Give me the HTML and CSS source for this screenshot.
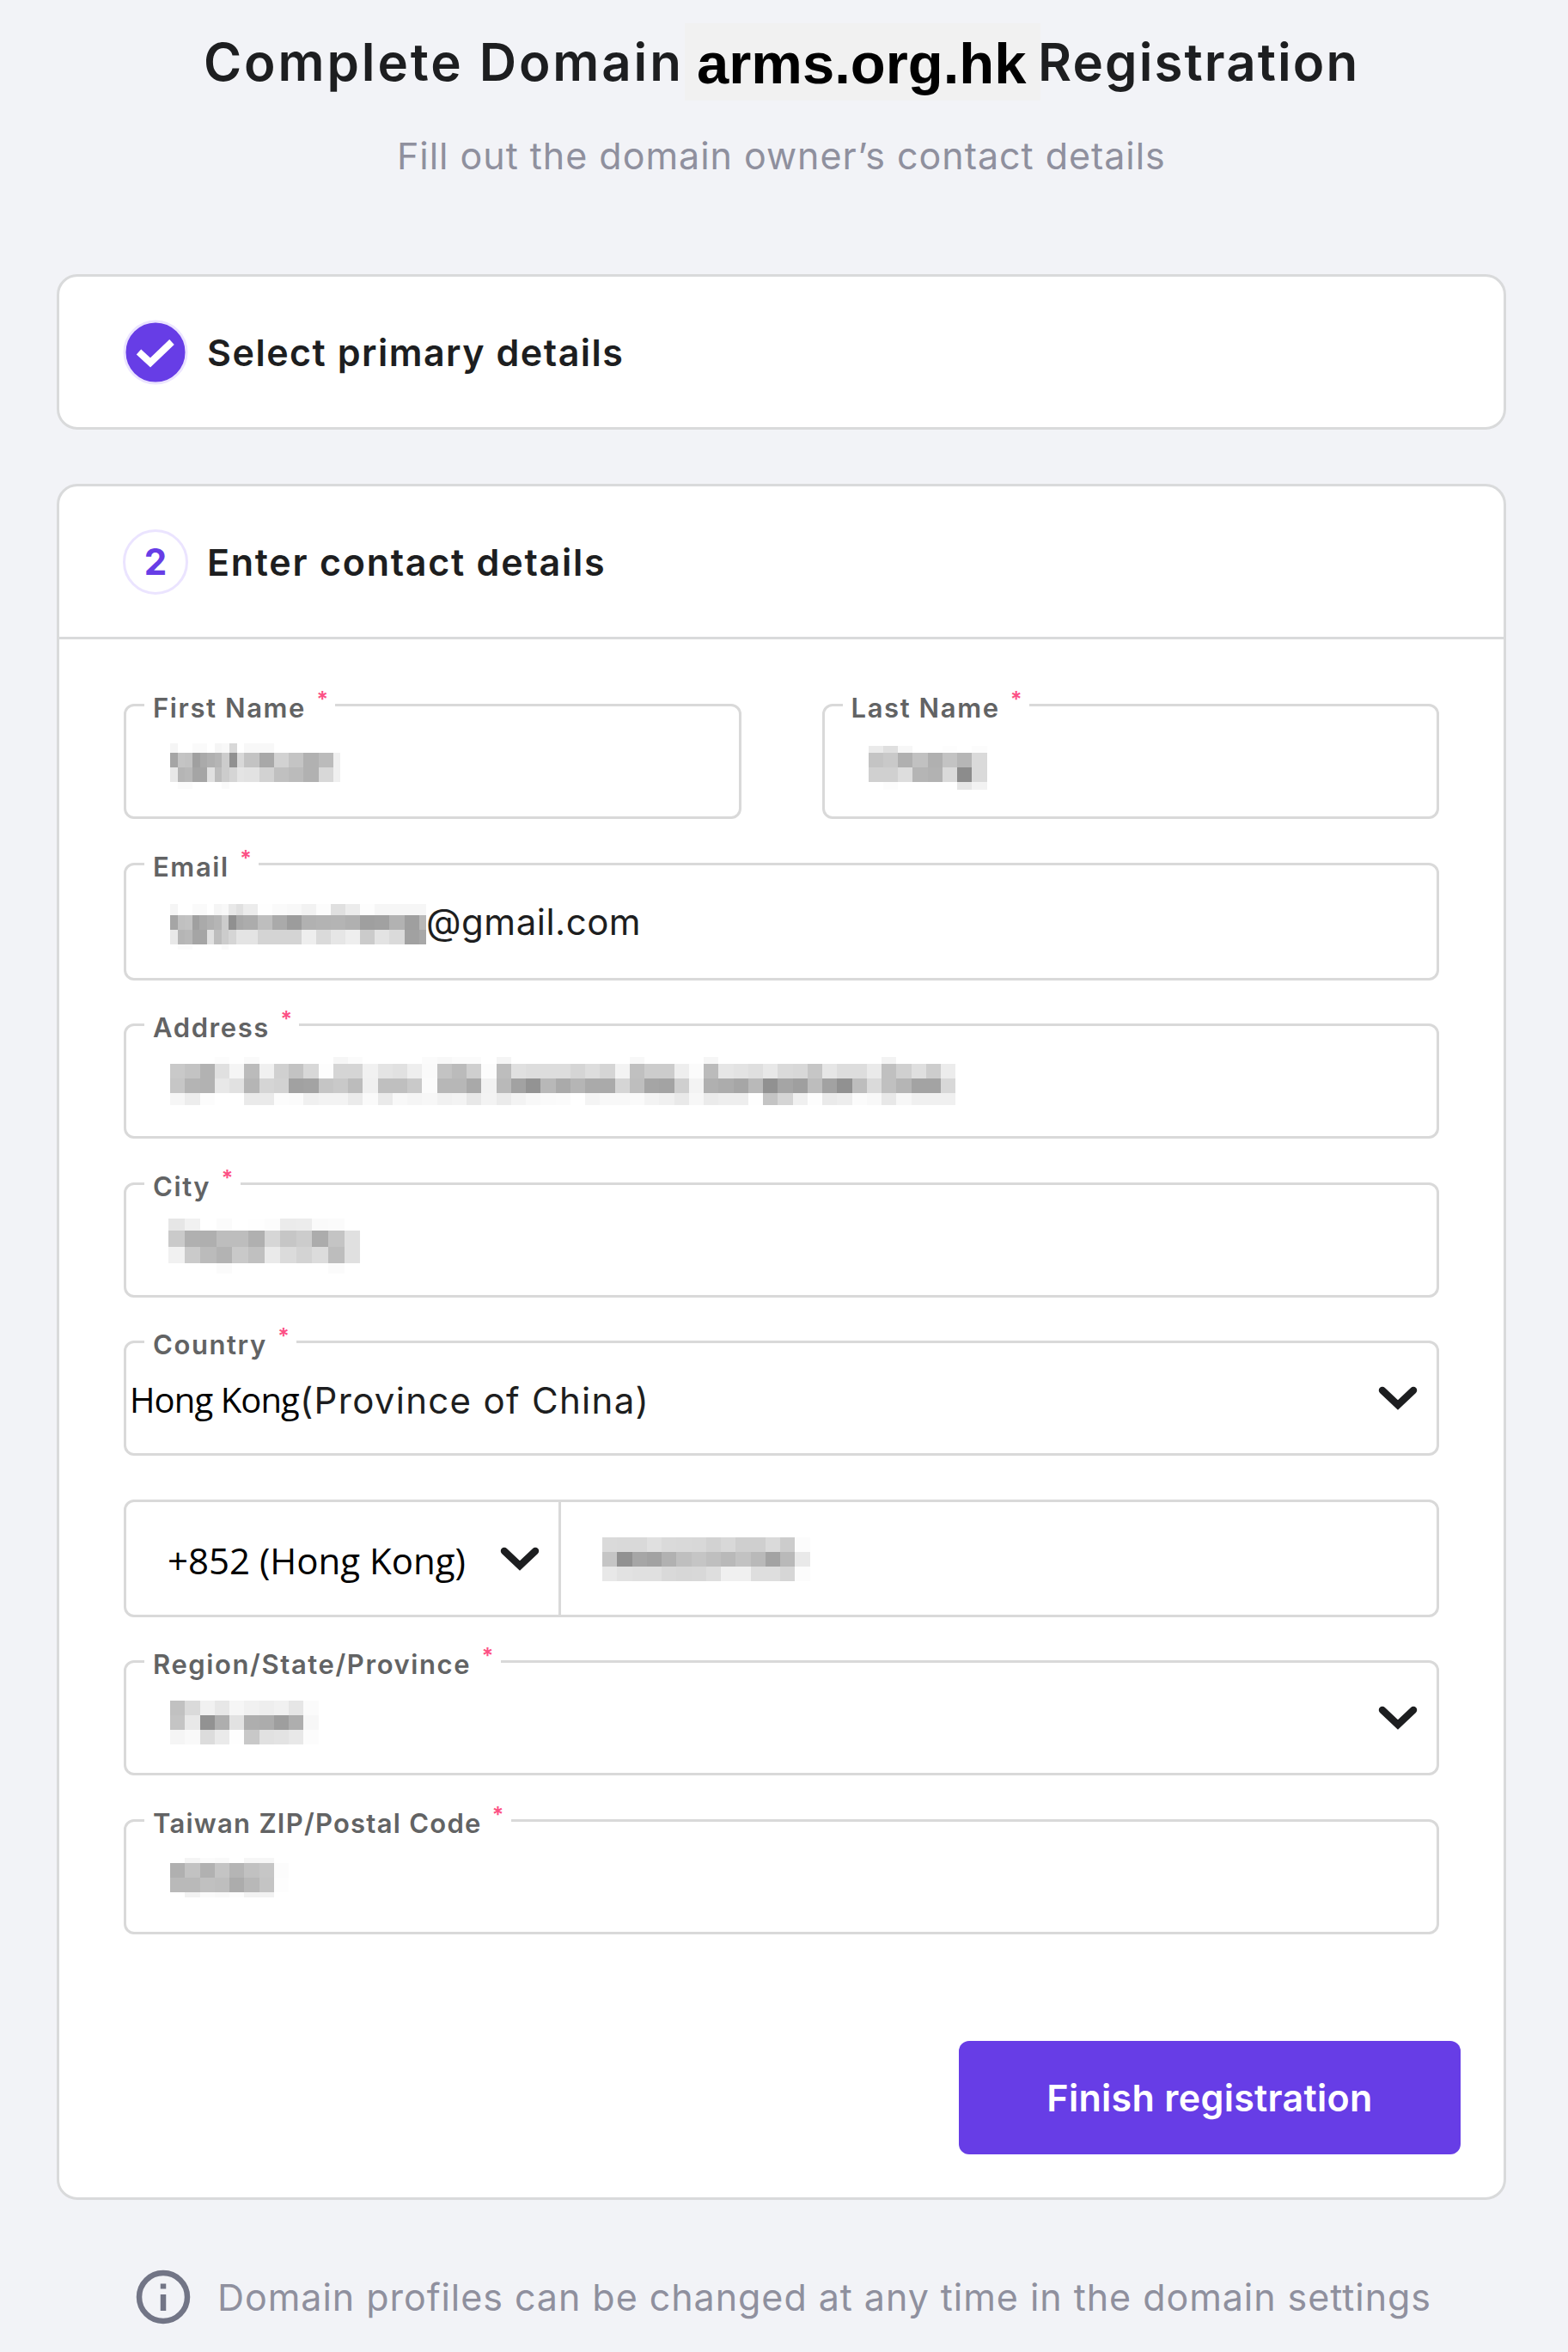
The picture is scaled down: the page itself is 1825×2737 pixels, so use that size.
FILE: index.html
```html
<!DOCTYPE html>
<html lang="en">
<head>
  <meta charset="UTF-8">
  <meta name="viewport" content="width=device-width, initial-scale=1.0">
  <title>Complete Domain Registration</title>
  <link rel="stylesheet" href="styles.css">
</head>
<body>

  <header class="header">
    <h1 class="title"><span class="t1">Complete Domain</span><span class="domain">arms.org.hk</span><span class="t2">Registration</span></h1>
    <p class="subtitle">Fill out the domain owner’s contact details</p>
  </header>

  <section class="card">
    <div class="card-head">
      <svg class="step" viewBox="0 0 76 76">
        <circle cx="38" cy="38" r="36" fill="#673de6" stroke="#ebe4ff" stroke-width="3"/>
        <path d="M18.500 37.500L32 50L57 26" fill="none" stroke="#fff" stroke-width="8"/>
      </svg>
      <h2 class="h-select">Select primary details</h2>
    </div>
  </section>

  <section class="card card-form">
    <div class="card-head">
      <span class="step step-num">2</span>
      <h2 class="h-enter">Enter contact details</h2>
    </div>

    <form class="form">
      <div class="row">
        <div class="field">
          <label>First Name <sup>*</sup></label>
          <div class="mosaic m-first" data-rows="f5fffffafafff5f8d8fff8f8f8f8 a5c4c2a0aab0b5cc90d8c3c3a8a8d2d2c4c4b1b1bbbbf0 e8b5b8a5a5e0bdccd5e4e2e2d2d2c0c0bbbbb1b1d8d8f0 fffbfbfffffffffa"></div>
        </div>
        <div class="field">
          <label>Last Name <sup>*</sup></label>
          <div class="mosaic m-last" data-rows="eadff7fffffdfffc c4c9b0c1b0c3b6da d0d0ddb5b2da8cda fffcffffffffe6f2"></div>
        </div>
      </div>

      <div class="field tall">
        <label>Email <sup>*</sup></label>
        <div class="mosaic m-email" data-rows="f5fffffafafff5f8e8e0ececfefefafaf8f8f2f2fcfce0e0ececfdfdf6f6f6f6f6f6f6 a5c0c2a0aab0b5cc90a8acacbebeaaaa9c9cb1b1b3b3b4b4b0b09f9fa1a1b2b29f9fb8 e8b5b8a5a5e0bdccd5e4e4e4d4d4d4d4d4d4eeeedadae6e6eeeecbcbe3e3dadaa1a1a8 fffbfbfffffffffa"></div>
        <span class="value v-mail">@gmail.com</span>
      </div>

      <div class="field">
        <label>Address <sup>*</sup></label>
        <div class="mosaic m-address" data-rows="fffffffcfffafffffffffff6fbfffffffffbf8fbfbfff5fffffffffffffffff8fffffffff6fffffffffffffffffffffff3 c9c3b2e0f5bbf0d0c3d8fdd5d5f1e4e1eefac3bbcffcbde0ddddddd5ddd5f3c0cccceefbbbe6e3dfe8dad8c6e6ddddeac0d0dfcdec c6b4b2e8e1b5d5d2a1a3c5c9bcf0bfbfc9fbb7b7a9f2b9a293b8aab5aaaad5bea5a3cff3b0aca6b991a59fbda291bddac0b5a3a3d8 f6edfcffffeaeafcfbf0f3f3ebfaeaf8f5f7f1f3e8f3ebf3f8fafbfff4f8f8faf3f0e9f7ebeeeefec4d5f0fdeaedfbf8e8f7f0f0f0"></div>
      </div>

      <div class="field">
        <label>City <sup>*</sup></label>
        <div class="mosaic m-city" data-rows="e6f1fffbfffefcebecfafbff cab0afbdbdb0d6c6ccacc4e0 f1cabbb3c9c0eadbd3dcbde0 fffffffbfffffffffffffbff"></div>
      </div>

      <div class="field">
        <label>Country <sup>*</sup></label>
        <span class="value v-hk">Hong Kong</span><span class="value v-prov">(Province of China)</span>
        <svg class="chevron" viewBox="0 0 46 30"><path d="M5 5L23 22L41 5" fill="none" stroke="#1d1e20" stroke-width="8.500" stroke-linecap="round"/></svg>
      </div>

      <div class="field tall phone">
        <div class="code">
          <span class="value v-code">+852 (Hong Kong)</span>
          <svg class="chevron" viewBox="0 0 46 30"><path d="M5 5L23 22L41 5" fill="none" stroke="#1d1e20" stroke-width="8.500" stroke-linecap="round"/></svg>
        </div>
        <div class="mosaic m-phone" data-rows="dad9d9e0dad9d8d2d8cfcfdaccfc c591a6a2b1bfc5bfb9c2b9a3b9e9 e8e2e0e0d9d7d8def0f0deded6fc"></div>
      </div>

      <div class="field">
        <label>Region/State/Province <sup>*</sup></label>
        <div class="mosaic m-region" data-rows="c1daf1e7f6f1eef1e6fb c4e892aee2aeac9eaef7 f5f9dceafec8e1e3e8fc"></div>
        <svg class="chevron" viewBox="0 0 46 30"><path d="M5 5L23 22L41 5" fill="none" stroke="#1d1e20" stroke-width="8.500" stroke-linecap="round"/></svg>
      </div>

      <div class="field">
        <label class="l-zip">Taiwan ZIP/Postal Code <sup>*</sup></label>
        <div class="mosaic m-zip" data-rows="fff4fbf9fff6f6ff b0c2b1c4b5c1c6fc b9b9c0beacb8c4fd fff2faf8fcf2f2ff"></div>
      </div>

      <button type="button" class="submit">Finish registration</button>
    </form>
  </section>

  <footer class="note">
    <svg class="info" viewBox="0 0 64 64">
      <circle cx="32" cy="32" r="28" fill="none" stroke="#727586" stroke-width="6.500"/>
      <path d="M32 16.500V22.500M32 29V48" stroke="#727586" stroke-width="6.500"/>
    </svg>
    <span>Domain profiles can be changed at any time in the domain settings</span>
  </footer>

  <script src="script.js"></script>
</body>
</html>
```
FILE: styles.css
```css
* {
  box-sizing: border-box;
}
body {
  margin: 0;
  padding: 0 72px 0 66px;
  height: 2737px;
  overflow: hidden;
  background-color: #f2f3f7;
  font-family: Inter, "Liberation Sans", sans-serif;
  color: #1d1e20;
}
.header {
  height: 319px;
  padding-top: 27px;
}
.title {
  display: flex;
  align-items: flex-start;
  margin: 0;
  padding-left: 171px;
  height: 90px;
  font-size: 60px;
  font-weight: 600;
  line-height: 90px;
  white-space: nowrap;
}
.t1 {
  width: 560px;
  letter-spacing: 2.9px;
}
.t2 {
  margin-left: -3px;
  letter-spacing: 2.1px;
}
.domain {
  width: 414px;
  height: 90px;
  padding-left: 14px;
  background-color: #f1f1f1;
  color: #000;
  font-family: "Liberation Sans", sans-serif;
  font-weight: bold;
  font-size: 67px;
  line-height: 93px;
}
.subtitle {
  margin: 34px 0 0;
  padding-left: 396px;
  font-size: 43px;
  line-height: 60px;
  letter-spacing: 0.97px;
  color: #8f909e;
  white-space: nowrap;
}
.card {
  height: 181px;
  margin-bottom: 63px;
  background-color: #fff;
  border: 3px solid #d9dadb;
  border-radius: 24px;
}
.card-form {
  height: 1997px;
  margin-bottom: 0;
}
.card-head {
  display: flex;
  align-items: center;
  height: 175px;
  padding-left: 74px;
}
.card-form .card-head {
  height: 178px;
  border-bottom: 3px solid #d9dadb;
}
.step {
  width: 76px;
  height: 76px;
  flex: none;
}
.step-num {
  display: flex;
  align-items: center;
  justify-content: center;
  border: 3px solid #ebe4ff;
  border-radius: 50%;
  color: #673de6;
  font-size: 42px;
  font-weight: 700;
}
h2 {
  margin: 0 0 0 22px;
  font-size: 43px;
  font-weight: 600;
  white-space: nowrap;
}
.h-select {
  letter-spacing: 1.5px;
}
.h-enter {
  letter-spacing: 1.75px;
}
.form {
  display: flex;
  flex-direction: column;
  gap: 50.6px;
  padding: 75.2px 75px 0 75px;
}
.row {
  display: grid;
  grid-template-columns: 1fr 1fr;
  gap: 94px;
}
.field {
  position: relative;
  display: flex;
  align-items: flex-start;
  height: 134px;
  padding-left: 51px;
  border: 3px solid #d9d9d9;
  border-radius: 12px;
}
.tall {
  height: 136.8px;
}
/* label sits on top of the field border */
label {
  position: absolute;
  left: 21px;
  top: -18px;
  padding: 0 10px;
  background-color: #fff;
  font-size: 31px;
  font-weight: 600;
  line-height: 40px;
  letter-spacing: 1.6px;
  color: #626364;
  white-space: nowrap;
}
.l-zip {
  letter-spacing: 1.25px;
}
sup {
  display: inline-block;
  width: 12px;
  margin-left: 3px;
  color: #fc5185;
  font-size: 25px;
  line-height: 0;
  vertical-align: 12px;
}
.value {
  font-size: 42px;
  line-height: 60px;
  white-space: nowrap;
}
.v-mail {
  margin-top: 36px;
  letter-spacing: 0.5px;
}
.v-hk,
.v-code {
  font-family: "Open Sans", sans-serif;
  color: #000;
}
.v-hk {
  width: 198px;
  margin: 36px 0 0 -47px;
  font-size: 40px;
  letter-spacing: -0.9px;
}
.v-prov {
  margin-top: 37px;
  letter-spacing: 1.3px;
}
.chevron {
  width: 46px;
  height: 30px;
  margin: 50px 22px 0 auto;
}
.phone {
  padding-left: 0;
}
.code {
  display: flex;
  width: 506px;
  height: 100%;
  padding-left: 48px;
  border-right: 3px solid #d9d9d9;
}
.code .value {
  margin-top: 38px;
}
.code .chevron {
  margin-top: 52px;
}
.mosaic {
  display: grid;
  grid-auto-columns: 17.26px;
}
.m-first {
  margin-top: 43px;
  grid-auto-columns: 8.63px;
  grid-template-rows: 11px 17px 17px 8px;
}
.m-last {
  margin-top: 46px;
  grid-template-rows: 8px 17px 17px 9px;
}
.m-email {
  margin-top: 45px;
  grid-auto-columns: 8.52px;
  grid-template-rows: 13px 17px 17px 6px;
}
.m-address {
  margin-top: 36px;
  grid-template-rows: 8px 17px 17px 14px;
}
.m-city {
  margin: 39px 0 0 -2px;
  grid-auto-columns: 18.6px;
  grid-template-rows: 14px 19px 19px 12px;
}
.m-phone {
  margin: 41px 0 0 48px;
  grid-template-rows: 17px 17px 17px;
}
.m-region {
  margin-top: 44px;
  grid-template-rows: 17px 17px 17px;
}
.m-zip {
  margin-top: 42px;
  grid-template-rows: 6px 17px 17px 6px;
}
.submit {
  align-self: flex-end;
  width: 584px;
  height: 132px;
  margin: 73.5px -25px 0 0;
  padding: 0;
  border: none;
  border-radius: 12px;
  background-color: #673de6;
  color: #fff;
  font-family: inherit;
  font-size: 43px;
  font-weight: 600;
  letter-spacing: 0.3px;
}
.note {
  display: flex;
  align-items: center;
  gap: 31px;
  height: 64px;
  margin-top: 81px;
  padding-left: 92px;
  font-size: 43px;
  letter-spacing: 0.95px;
  color: #8f909e;
  white-space: nowrap;
}
.info {
  width: 64px;
  height: 64px;
  flex: none;
}
```
FILE: script.js
```javascript
// masked values: each row is a string of two-digit grey levels
document.querySelectorAll('.mosaic').forEach(function (el) {
  el.dataset.rows.split(' ').forEach(function (row, y) {
    row.match(/../g).forEach(function (g, x) {
      var cell = document.createElement('i');
      cell.style.gridArea = (y + 1) + ' / ' + (x + 1);
      cell.style.backgroundColor = '#' + g + g + g;
      el.appendChild(cell);
    });
  });
});
```
